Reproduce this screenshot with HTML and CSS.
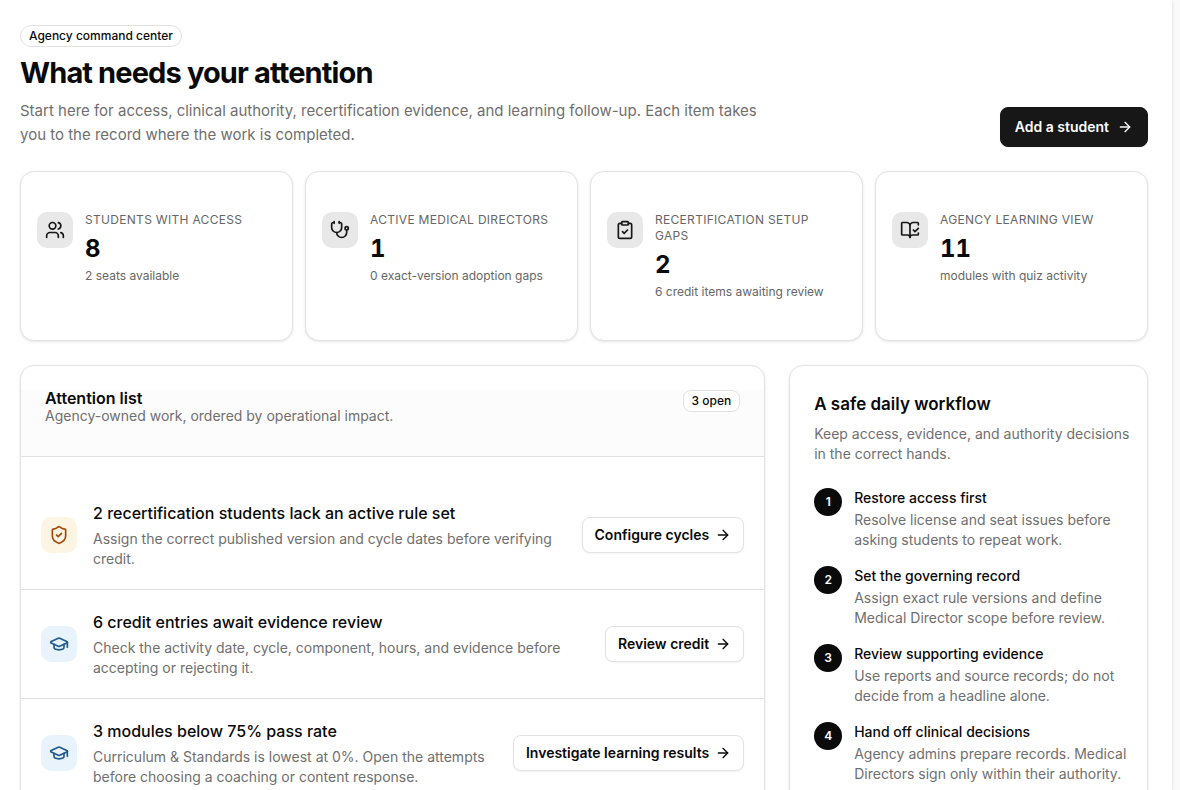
FILE: index.html
```html
<!DOCTYPE html>
<html lang="en">
<head>
<meta charset="utf-8">
<meta name="viewport" content="width=device-width, initial-scale=1">
<title>Agency command center</title>
<link rel="stylesheet" href="styles.css">
</head>
<body>
<svg class="sprite" aria-hidden="true">
  <symbol id="arrow" viewBox="0 0 24 24"><path d="M5 12h14"/><path d="m12 5 7 7-7 7"/></symbol>
  <symbol id="users" viewBox="0 0 24 24"><path d="M16 21v-2a4 4 0 0 0-4-4H6a4 4 0 0 0-4 4v2"/><path d="M16 3.128a4 4 0 0 1 0 7.744"/><path d="M22 21v-2a4 4 0 0 0-3-3.87"/><circle cx="9" cy="7" r="4"/></symbol>
  <symbol id="stethoscope" viewBox="0 0 24 24"><path d="M11 2v2"/><path d="M5 2v2"/><path d="M5 3H4a2 2 0 0 0-2 2v4a6 6 0 0 0 12 0V5a2 2 0 0 0-2-2h-1"/><path d="M8 15a6 6 0 0 0 12 0v-3"/><circle cx="20" cy="10" r="2"/></symbol>
  <symbol id="clipboard" viewBox="0 0 24 24"><rect width="8" height="4" x="8" y="2" rx="1" ry="1"/><path d="M16 4h2a2 2 0 0 1 2 2v14a2 2 0 0 1-2 2H6a2 2 0 0 1-2-2V6a2 2 0 0 1 2-2h2"/><path d="m9 14 2 2 4-4"/></symbol>
  <symbol id="book" viewBox="0 0 24 24"><path d="M12 21V7"/><path d="m16 12 2 2 4-4"/><path d="M22 6V4a1 1 0 0 0-1-1h-5a4 4 0 0 0-4 4 4 4 0 0 0-4-4H3a1 1 0 0 0-1 1v13a1 1 0 0 0 1 1h6a3 3 0 0 1 3 3 3 3 0 0 1 3-3h6a1 1 0 0 0 1-1v-1.3"/></symbol>
  <symbol id="shield" viewBox="0 0 24 24"><path d="M20 13c0 5-3.500 7.500-7.660 8.950a1 1 0 0 1-.67-.01C7.500 20.500 4 18 4 13V6a1 1 0 0 1 1-1c2 0 4.500-1.200 6.240-2.720a1.170 1.170 0 0 1 1.520 0C14.510 3.810 17 5 19 5a1 1 0 0 1 1 1z"/><path d="m9 12 2 2 4-4"/></symbol>
  <symbol id="cap" viewBox="0 0 24 24"><path d="M21.420 10.922a1 1 0 0 0-.019-1.838L12.830 5.180a2 2 0 0 0-1.660 0L2.600 9.080a1 1 0 0 0 0 1.832l8.570 3.908a2 2 0 0 0 1.660 0z"/><path d="M22 10v6"/><path d="M6 12.500V16a6 3 0 0 0 12 0v-3.500"/></symbol>
</svg>
<main class="page">
  <header class="page-header">
    <div class="intro">
      <span class="badge">Agency command center</span>
      <h1 class="page-title">What needs your attention</h1>
      <p class="lead">Start here for access, clinical authority, recertification evidence, and learning follow-up. Each item takes you to the record where the work is completed.</p>
    </div>
    <a class="button button-primary" href="#add-student">Add a student <svg class="icon"><use href="#arrow"/></svg></a>
  </header>

  <section class="metrics" aria-label="Agency metrics">
    <article class="card metric">
      <span class="tile"><svg class="icon icon-lg"><use href="#users"/></svg></span>
      <div class="metric-body">
        <p class="metric-label">Students with access</p>
        <p class="metric-value">8</p>
        <p class="metric-note">2 seats available</p>
      </div>
    </article>
    <article class="card metric">
      <span class="tile"><svg class="icon icon-lg"><use href="#stethoscope"/></svg></span>
      <div class="metric-body">
        <p class="metric-label">Active medical directors</p>
        <p class="metric-value">1</p>
        <p class="metric-note">0 exact-version adoption gaps</p>
      </div>
    </article>
    <article class="card metric">
      <span class="tile"><svg class="icon icon-lg"><use href="#clipboard"/></svg></span>
      <div class="metric-body">
        <p class="metric-label">Recertification setup gaps</p>
        <p class="metric-value">2</p>
        <p class="metric-note">6 credit items awaiting review</p>
      </div>
    </article>
    <article class="card metric">
      <span class="tile"><svg class="icon icon-lg"><use href="#book"/></svg></span>
      <div class="metric-body">
        <p class="metric-label">Agency learning view</p>
        <p class="metric-value">11</p>
        <p class="metric-note">modules with quiz activity</p>
      </div>
    </article>
  </section>

  <div class="columns">
    <section class="card attention">
      <header class="attention-header">
        <div>
          <h2 class="attention-title">Attention list</h2>
          <p class="text">Agency-owned work, ordered by operational impact.</p>
        </div>
        <span class="badge badge-count">3 open</span>
      </header>
      <ul class="tasks">
        <li class="task">
          <span class="tile tile-amber"><svg class="icon icon-lg"><use href="#shield"/></svg></span>
          <div class="task-body">
            <h3 class="task-title">2 recertification students lack an active rule set</h3>
            <p class="text">Assign the correct published version and cycle dates before verifying credit.</p>
          </div>
          <a class="button" href="#cycles">Configure cycles <svg class="icon"><use href="#arrow"/></svg></a>
        </li>
        <li class="task">
          <span class="tile tile-blue"><svg class="icon icon-lg"><use href="#cap"/></svg></span>
          <div class="task-body">
            <h3 class="task-title">6 credit entries await evidence review</h3>
            <p class="text">Check the activity date, cycle, component, hours, and evidence before accepting or rejecting it.</p>
          </div>
          <a class="button" href="#credit">Review credit <svg class="icon"><use href="#arrow"/></svg></a>
        </li>
        <li class="task">
          <span class="tile tile-blue"><svg class="icon icon-lg"><use href="#cap"/></svg></span>
          <div class="task-body">
            <h3 class="task-title">3 modules below 75% pass rate</h3>
            <p class="text">Curriculum &amp; Standards is lowest at 0%. Open the attempts before choosing a coaching or content response.</p>
          </div>
          <a class="button" href="#learning">Investigate learning results <svg class="icon"><use href="#arrow"/></svg></a>
        </li>
      </ul>
    </section>

    <aside class="card workflow">
      <h2 class="workflow-title">A safe daily workflow</h2>
      <p class="text">Keep access, evidence, and authority decisions in the correct hands.</p>
      <ol class="steps">
        <li class="step">
          <span class="step-number">1</span>
          <div>
            <h3 class="step-title">Restore access first</h3>
            <p class="text">Resolve license and seat issues before asking students to repeat work.</p>
          </div>
        </li>
        <li class="step">
          <span class="step-number">2</span>
          <div>
            <h3 class="step-title">Set the governing record</h3>
            <p class="text">Assign exact rule versions and define Medical Director scope before review.</p>
          </div>
        </li>
        <li class="step">
          <span class="step-number">3</span>
          <div>
            <h3 class="step-title">Review supporting evidence</h3>
            <p class="text">Use reports and source records; do not decide from a headline alone.</p>
          </div>
        </li>
        <li class="step">
          <span class="step-number">4</span>
          <div>
            <h3 class="step-title">Hand off clinical decisions</h3>
            <p class="text">Agency admins prepare records. Medical Directors sign only within their authority.</p>
          </div>
        </li>
      </ol>
    </aside>
  </div>
</main>
</body>
</html>
```
FILE: styles.css
```css
* { box-sizing: border-box; }

body {
  margin: 0;
  padding-right: 8px;
  height: 100vh;
  overflow: hidden;
  background: #fafafa;
  color: #0a0a0a;
  font-family: Inter, "Liberation Sans", sans-serif;
  font-size: 14px;
  line-height: 20px;
}

h1, h2, h3, p, ul, ol { margin: 0; padding: 0; }
ul, ol { list-style: none; }

.sprite { display: none; }

.icon {
  width: 16px;
  height: 16px;
  flex: none;
  fill: none;
  stroke: currentColor;
  stroke-width: 2;
  stroke-linecap: round;
  stroke-linejoin: round;
}
.icon-lg { width: 20px; height: 20px; }

.page {
  display: flex;
  flex-direction: column;
  gap: 24px;
  height: 100%;
  padding: 25px 24px 24px 20px;
  overflow-y: auto;
  scrollbar-width: none;
  background: #fff;
  box-shadow: 0 1px 3px rgba(0, 0, 0, 0.15);
}
.page > * { flex: none; }

.page-header {
  display: flex;
  align-items: flex-end;
  justify-content: space-between;
  gap: 16px;
}
.intro {
  display: flex;
  flex-direction: column;
  align-items: flex-start;
  gap: 8px;
  max-width: 760px;
}
.page-title {
  font-size: 29px;
  line-height: 36px;
  font-weight: 700;
  letter-spacing: -0.03em;
}
.lead {
  color: #6f6f6f;
  font-size: 15px;
  line-height: 24px;
}

.badge {
  flex: none;
  padding: 2px 8px;
  border: 1px solid #e2e2e2;
  border-radius: 11px;
  background: #fff;
  font-size: 12px;
  line-height: 16px;
  font-weight: 500;
}
.badge-count { border-radius: 8px; }

.button {
  display: inline-flex;
  flex: none;
  align-items: center;
  gap: 6px;
  height: 36px;
  padding: 0 12px;
  border: 1px solid #e2e2e2;
  border-radius: 8px;
  background: #fff;
  box-shadow: 0 1px 2px rgba(0, 0, 0, 0.05);
  color: #0a0a0a;
  font-weight: 600;
  text-decoration: none;
  white-space: nowrap;
}
.button-primary {
  gap: 8px;
  height: 40px;
  padding: 0 14px;
  border-color: #171717;
  background: #171717;
  color: #fafafa;
}

.card {
  border: 1px solid #e2e2e2;
  border-radius: 14px;
  background: #fff;
  box-shadow: 0 1px 3px rgba(0, 0, 0, 0.1);
}

.tile {
  display: grid;
  flex: none;
  place-items: center;
  width: 36px;
  height: 36px;
  border-radius: 10px;
  background: #e8e8e8;
  color: #171717;
}
.tile-amber { background: #fdf5e3; color: #a3480b; }
.tile-blue { background: #e8f3fb; color: #215a8e; }

.metrics {
  display: grid;
  grid-template-columns: repeat(4, minmax(0, 1fr));
  gap: 12px;
}
.metric {
  display: flex;
  gap: 12px;
  padding: 40px 16px;
}
.metric-label, .metric-note {
  color: #666;
  font-size: 12px;
  line-height: 16px;
}
.metric-label {
  letter-spacing: 0.025em;
  text-transform: uppercase;
}
.metric-value {
  padding: 5px 0 3px;
  font-size: 24px;
  line-height: 32px;
  font-weight: 700;
  font-variant-numeric: tabular-nums;
}

.columns {
  display: grid;
  grid-template-columns: minmax(0, 135fr) minmax(0, 65fr);
  gap: 24px;
}

.text { color: #6f6f6f; }

.attention { padding-top: 24px; }
.attention-header {
  display: flex;
  align-items: flex-start;
  justify-content: space-between;
  gap: 16px;
  padding: 0 24px 30px;
  border-bottom: 1px solid #e2e2e2;
  background: #fcfcfc;
}
.attention-title {
  font-size: 16px;
  line-height: 16px;
  font-weight: 600;
}
.tasks { padding-top: 24px; }
.task {
  display: flex;
  align-items: center;
  gap: 16px;
  padding: 20px;
}
.task + .task { border-top: 1px solid #e2e2e2; }
.task-body { flex: 1; min-width: 0; }
.task-title {
  margin-bottom: 4px;
  font-size: 16px;
  line-height: 24px;
  font-weight: 500;
}

.workflow { padding: 24px 16px 24px 24px; }
.workflow-title {
  margin-bottom: 6px;
  font-size: 17px;
  line-height: 28px;
  font-weight: 600;
}
.steps {
  display: grid;
  gap: 16px;
  margin-top: 24px;
}
.step { display: flex; gap: 12px; }
.step-number {
  display: grid;
  flex: none;
  place-items: center;
  width: 28px;
  height: 28px;
  border-radius: 50%;
  background: #0a0a0a;
  color: #fff;
  font-size: 12px;
  font-weight: 600;
}
.step-title {
  margin-bottom: 2px;
  font-size: 14px;
  line-height: 20px;
  font-weight: 500;
}
```
